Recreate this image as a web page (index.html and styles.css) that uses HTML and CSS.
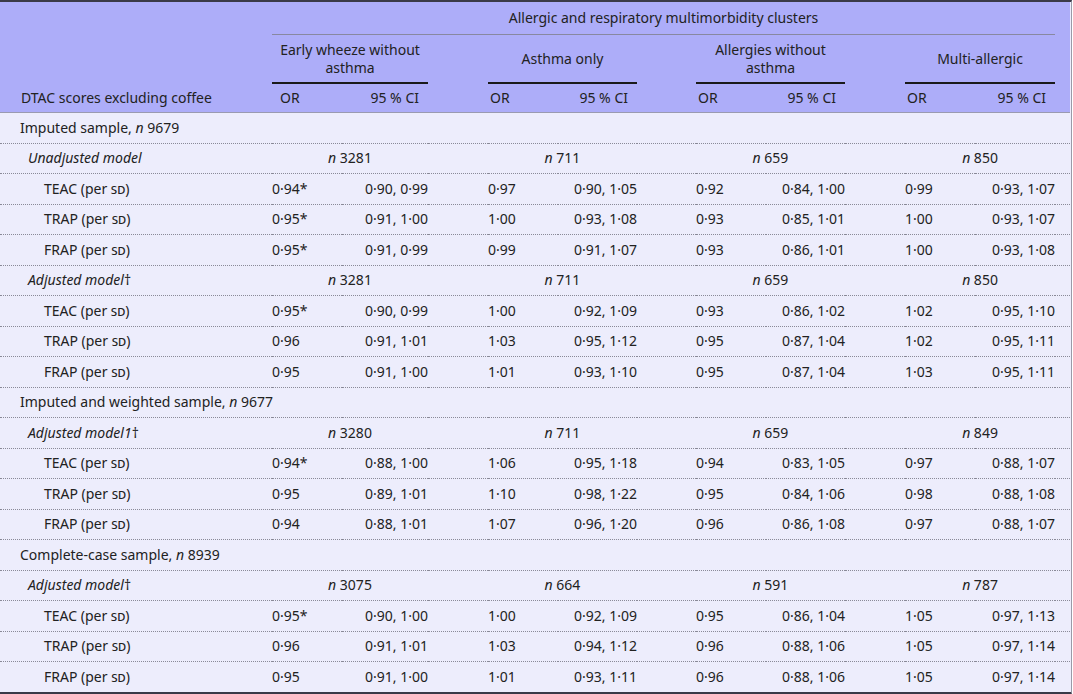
FILE: index.html
```html
<!DOCTYPE html>
<html>
<head>
<meta charset="utf-8">
<link rel="stylesheet" href="styles.css">
</head>
<body>
<div class="frame">
<table class="tbl">
  <colgroup>
    <col class="c-label">
    <col class="c-or"><col class="c-ci1"><col class="c-gap">
    <col class="c-or"><col class="c-ci"><col class="c-gap2">
    <col class="c-or"><col class="c-ci"><col class="c-gap">
    <col class="c-or"><col class="c-ci4"><col class="c-end">
  </colgroup>
  <thead>
    <tr class="h1">
      <th></th>
      <th colspan="11" class="span-top">Allergic and respiratory multimorbidity clusters</th>
      <th></th>
    </tr>
    <tr class="h2">
      <th></th>
      <th colspan="2" class="grp">Early wheeze without<br>asthma</th><th></th>
      <th colspan="2" class="grp">Asthma only</th><th></th>
      <th colspan="2" class="grp">Allergies without<br>asthma</th><th></th>
      <th colspan="2" class="grp">Multi-allergic</th><th></th>
    </tr>
    <tr class="h3">
      <th class="lbl-head">DTAC scores excluding coffee</th>
      <th class="or-h first">OR</th><th class="ci-h">95 % CI</th><th></th>
      <th class="or-h">OR</th><th class="ci-h">95 % CI</th><th></th>
      <th class="or-h">OR</th><th class="ci-h">95 % CI</th><th></th>
      <th class="or-h">OR</th><th class="ci-h">95 % CI</th><th></th>
    </tr>
  </thead>
  <tbody>
    <tr class="sec"><td class="l0">Imputed sample, <i>n</i> 9679</td><td colspan="12"></td></tr>
    <tr><td class="l1"><i>Unadjusted model</i></td><td colspan="2" class="n"><i>n</i> 3281</td><td></td><td colspan="2" class="n"><i>n</i> 711</td><td></td><td colspan="2" class="n"><i>n</i> 659</td><td></td><td colspan="2" class="n"><i>n</i> 850</td><td></td></tr>
    <tr><td class="l2">TEAC (per <span class="sc">sd</span>)</td><td>0·94*</td><td class="ci">0·90, 0·99</td><td></td><td>0·97</td><td class="ci">0·90, 1·05</td><td></td><td>0·92</td><td class="ci">0·84, 1·00</td><td></td><td>0·99</td><td class="ci">0·93, 1·07</td><td></td></tr>
    <tr><td class="l2">TRAP (per <span class="sc">sd</span>)</td><td>0·95*</td><td class="ci">0·91, 1·00</td><td></td><td>1·00</td><td class="ci">0·93, 1·08</td><td></td><td>0·93</td><td class="ci">0·85, 1·01</td><td></td><td>1·00</td><td class="ci">0·93, 1·07</td><td></td></tr>
    <tr><td class="l2">FRAP (per <span class="sc">sd</span>)</td><td>0·95*</td><td class="ci">0·91, 0·99</td><td></td><td>0·99</td><td class="ci">0·91, 1·07</td><td></td><td>0·93</td><td class="ci">0·86, 1·01</td><td></td><td>1·00</td><td class="ci">0·93, 1·08</td><td></td></tr>
    <tr><td class="l1"><i>Adjusted model</i>†</td><td colspan="2" class="n"><i>n</i> 3281</td><td></td><td colspan="2" class="n"><i>n</i> 711</td><td></td><td colspan="2" class="n"><i>n</i> 659</td><td></td><td colspan="2" class="n"><i>n</i> 850</td><td></td></tr>
    <tr><td class="l2">TEAC (per <span class="sc">sd</span>)</td><td>0·95*</td><td class="ci">0·90, 0·99</td><td></td><td>1·00</td><td class="ci">0·92, 1·09</td><td></td><td>0·93</td><td class="ci">0·86, 1·02</td><td></td><td>1·02</td><td class="ci">0·95, 1·10</td><td></td></tr>
    <tr><td class="l2">TRAP (per <span class="sc">sd</span>)</td><td>0·96</td><td class="ci">0·91, 1·01</td><td></td><td>1·03</td><td class="ci">0·95, 1·12</td><td></td><td>0·95</td><td class="ci">0·87, 1·04</td><td></td><td>1·02</td><td class="ci">0·95, 1·11</td><td></td></tr>
    <tr><td class="l2">FRAP (per <span class="sc">sd</span>)</td><td>0·95</td><td class="ci">0·91, 1·00</td><td></td><td>1·01</td><td class="ci">0·93, 1·10</td><td></td><td>0·95</td><td class="ci">0·87, 1·04</td><td></td><td>1·03</td><td class="ci">0·95, 1·11</td><td></td></tr>
    <tr class="sec"><td class="l0" colspan="4">Imputed and weighted sample, <i>n</i> 9677</td><td colspan="9"></td></tr>
    <tr><td class="l1"><i>Adjusted model1</i>†</td><td colspan="2" class="n"><i>n</i> 3280</td><td></td><td colspan="2" class="n"><i>n</i> 711</td><td></td><td colspan="2" class="n"><i>n</i> 659</td><td></td><td colspan="2" class="n"><i>n</i> 849</td><td></td></tr>
    <tr><td class="l2">TEAC (per <span class="sc">sd</span>)</td><td>0·94*</td><td class="ci">0·88, 1·00</td><td></td><td>1·06</td><td class="ci">0·95, 1·18</td><td></td><td>0·94</td><td class="ci">0·83, 1·05</td><td></td><td>0·97</td><td class="ci">0·88, 1·07</td><td></td></tr>
    <tr><td class="l2">TRAP (per <span class="sc">sd</span>)</td><td>0·95</td><td class="ci">0·89, 1·01</td><td></td><td>1·10</td><td class="ci">0·98, 1·22</td><td></td><td>0·95</td><td class="ci">0·84, 1·06</td><td></td><td>0·98</td><td class="ci">0·88, 1·08</td><td></td></tr>
    <tr><td class="l2">FRAP (per <span class="sc">sd</span>)</td><td>0·94</td><td class="ci">0·88, 1·01</td><td></td><td>1·07</td><td class="ci">0·96, 1·20</td><td></td><td>0·96</td><td class="ci">0·86, 1·08</td><td></td><td>0·97</td><td class="ci">0·88, 1·07</td><td></td></tr>
    <tr class="sec"><td class="l0">Complete-case sample, <i>n</i> 8939</td><td colspan="12"></td></tr>
    <tr><td class="l1"><i>Adjusted model</i>†</td><td colspan="2" class="n"><i>n</i> 3075</td><td></td><td colspan="2" class="n"><i>n</i> 664</td><td></td><td colspan="2" class="n"><i>n</i> 591</td><td></td><td colspan="2" class="n"><i>n</i> 787</td><td></td></tr>
    <tr><td class="l2">TEAC (per <span class="sc">sd</span>)</td><td>0·95*</td><td class="ci">0·90, 1·00</td><td></td><td>1·00</td><td class="ci">0·92, 1·09</td><td></td><td>0·95</td><td class="ci">0·86, 1·04</td><td></td><td>1·05</td><td class="ci">0·97, 1·13</td><td></td></tr>
    <tr><td class="l2">TRAP (per <span class="sc">sd</span>)</td><td>0·96</td><td class="ci">0·91, 1·01</td><td></td><td>1·03</td><td class="ci">0·94, 1·12</td><td></td><td>0·96</td><td class="ci">0·88, 1·06</td><td></td><td>1·05</td><td class="ci">0·97, 1·14</td><td></td></tr>
    <tr class="last"><td class="l2">FRAP (per <span class="sc">sd</span>)</td><td>0·95</td><td class="ci">0·91, 1·00</td><td></td><td>1·01</td><td class="ci">0·93, 1·11</td><td></td><td>0·96</td><td class="ci">0·88, 1·06</td><td></td><td>1·05</td><td class="ci">0·97, 1·14</td><td></td></tr>
  </tbody>
</table>
</div>
</body>
</html>
```

FILE: styles.css
```css
html, body {
  margin: 0;
  padding: 0;
  background: #ffffff;
}

.frame {
  width: 1071px;
  border-top: 2px solid #3a3a48;
  border-bottom: 3px solid #3a3a48;
  border-right: 1px solid #9a9aa8;
  background: #ededfc;
}

.tbl {
  width: 1070px;
  table-layout: fixed;
  border-collapse: collapse;
  font-family: "Noto Sans", "DejaVu Sans", sans-serif;
  font-size: 14px;
  color: #222222;
}

.c-label { width: 272px; }
.c-or { width: 70px; }
.c-ci1 { width: 86px; }
.c-ci { width: 79px; }
.c-ci4 { width: 80px; }
.c-gap { width: 60px; }
.c-gap2 { width: 59px; }
.c-end { width: 15px; }

.tbl th {
  font-weight: normal;
  padding: 0;
  background: #adadf9;
}

.tbl td {
  padding: 0;
  height: 29.5px;
  line-height: 18px;
  border-bottom: 1px dotted #8a8a98;
  white-space: nowrap;
  vertical-align: middle;
}

.tbl tr.last td {
  border-bottom: none;
}

.h1 th {
  height: 32px;
  line-height: 18px;
  vertical-align: middle;
}

.span-top {
  border-bottom: 1px solid #8888a0;
}

.h2 th {
  height: 47px;
  vertical-align: middle;
  line-height: 18px;
}

.grp {
  border-bottom: 2px solid #1a1a1a;
  text-align: center;
}

.h3 th {
  height: 28px;
  line-height: 18px;
  border-bottom: 1px solid #9a9ab0;
  text-align: left;
  vertical-align: middle;
}

.lbl-head {
  padding-left: 21px !important;
}

.or-h {
  padding-left: 2px !important;
}

.or-h.first {
  padding-left: 8px !important;
}

.tbl th.ci-h {
  text-align: right;
  padding-right: 9px;
}

.ci {
  text-align: right;
}

.n {
  text-align: center;
}

.l0 { padding-left: 20px !important; }
.l1 { padding-left: 28px !important; }
.l2 { padding-left: 44px !important; }

.sc {
  font-variant: small-caps;
}
```
